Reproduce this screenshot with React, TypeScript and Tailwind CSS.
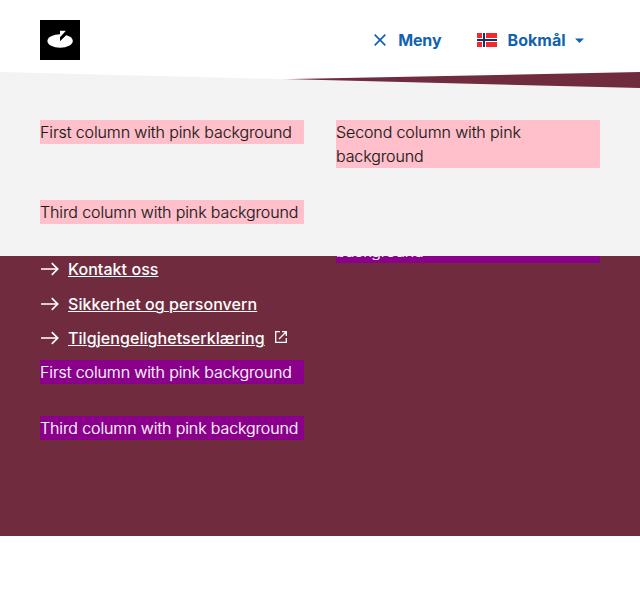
import React from "react";

function ArrowRight() {
  return (
    <svg width="20" height="20" viewBox="0 0 20 20" fill="none" stroke="currentColor" strokeWidth="1.7" className="shrink-0">
      <path d="M1 10H17.6M11.8 4.1L17.7 10L11.8 15.9" />
    </svg>
  );
}

function ExternalIcon() {
  return (
    <svg width="14" height="14" viewBox="0 0 14 14" fill="none" stroke="currentColor" strokeWidth="1.3" className="-mt-[2px] ml-[9px]">
      <path d="M6 1.7H1.7V12.3H12.3V8M8 1.7H12.3V6M12.3 1.7L5 9" />
    </svg>
  );
}

function Logo() {
  return (
    <svg width="40" height="40" viewBox="0 0 40 40" className="block">
      <rect width="40" height="40" fill="#000" />
      <ellipse cx="20.1" cy="21" rx="12.7" ry="6.8" fill="#fff" />
      <path d="M20 10.8H26.6L26.6 14.4L20 21Z" fill="#000" />
      <path d="M20 10.8H25.8L20 17.4Z" fill="#fff" />
      <path d="M20 17.2L24.2 13.4L26.6 14.4L20 21Z" fill="#000" />
    </svg>
  );
}

function Flag() {
  return (
    <svg width="20" height="14" viewBox="0 0 20 14" className="block">
      <rect width="20" height="14" fill="#f2292f" />
      <path d="M5 0H9V14H5ZM0 5H20V9H0Z" fill="#fff" />
      <path d="M6 0H8V14H6ZM0 6H20V8H0Z" fill="#1a2e63" />
    </svg>
  );
}

function FooterLink({ label, external }: { label: string; external?: boolean }) {
  return (
    <li className="flex h-6 items-center">
      <ArrowRight />
      <span className="ml-2 font-medium tracking-[0.06px] underline underline-offset-1 decoration-1">{label}</span>
      {external && <ExternalIcon />}
    </li>
  );
}

function Column({ text, className }: { text: string; className: string }) {
  return <p className={`font-light tracking-[-0.12px] [-webkit-text-stroke:0.15px] ${className}`}>{text}</p>;
}

export default function App() {
  return (
    <div className="relative h-[600px] w-[640px] overflow-hidden bg-white font-['Inter',sans-serif] text-base leading-6 text-[#1a1a1a]">
      <header className="flex h-[72px] items-start justify-between px-10 pt-5">
        <Logo />
        <nav className="mr-4 flex h-10 items-center font-bold text-[#1362ae]">
          <svg width="12" height="12" viewBox="0 0 12 12" fill="none" stroke="currentColor" strokeWidth="1.7">
            <path d="M.7 .7L11.3 11.3M11.3 .7L.7 11.3" />
          </svg>
          <span className="ml-3 tracking-[-0.15px]">Meny</span>
          <span className="ml-[35.6px]">
            <Flag />
          </span>
          <span className="ml-[10.6px]">Bokmål</span>
          <svg width="9" height="5" viewBox="0 0 9 5" className="ml-[9.5px]">
            <path d="M0 0.5H9L4.5 5Z" fill="currentColor" />
          </svg>
        </nav>
      </header>

      <footer className="h-[464px] bg-[#702c3e] px-10 pt-[185px] text-white [clip-path:polygon(0_13px,100%_0,100%_100%,0_100%)]">
        <div className="grid grid-cols-2 gap-x-8">
          <div className="flex flex-col">
            <ul className="flex flex-col gap-[10.5px]">
              <FooterLink label="Kontakt oss" />
              <FooterLink label="Sikkerhet og personvern" />
              <FooterLink label="Tilgjengelighetserklæring" external />
            </ul>
            <Column text="First column with pink background" className="mt-[10px] bg-[#8b008b]" />
            <Column text="Third column with pink background" className="mt-8 bg-[#8b008b]" />
          </div>
          <Column text="background" className="-mt-[18px] h-6 bg-[#8b008b]" />
        </div>
      </footer>

      <div className="absolute left-0 top-[72px] h-[184px] w-full bg-[#f3f3f3] px-10 pt-12 [clip-path:polygon(0_0,100%_16px,100%_100%,0_100%)]">
        <div className="grid grid-cols-2 items-start gap-8">
          <Column text="First column with pink background" className="bg-[#ffc0cb]" />
          <Column text="Second column with pink background" className="bg-[#ffc0cb]" />
          <Column text="Third column with pink background" className="bg-[#ffc0cb]" />
        </div>
      </div>
    </div>
  );
}
